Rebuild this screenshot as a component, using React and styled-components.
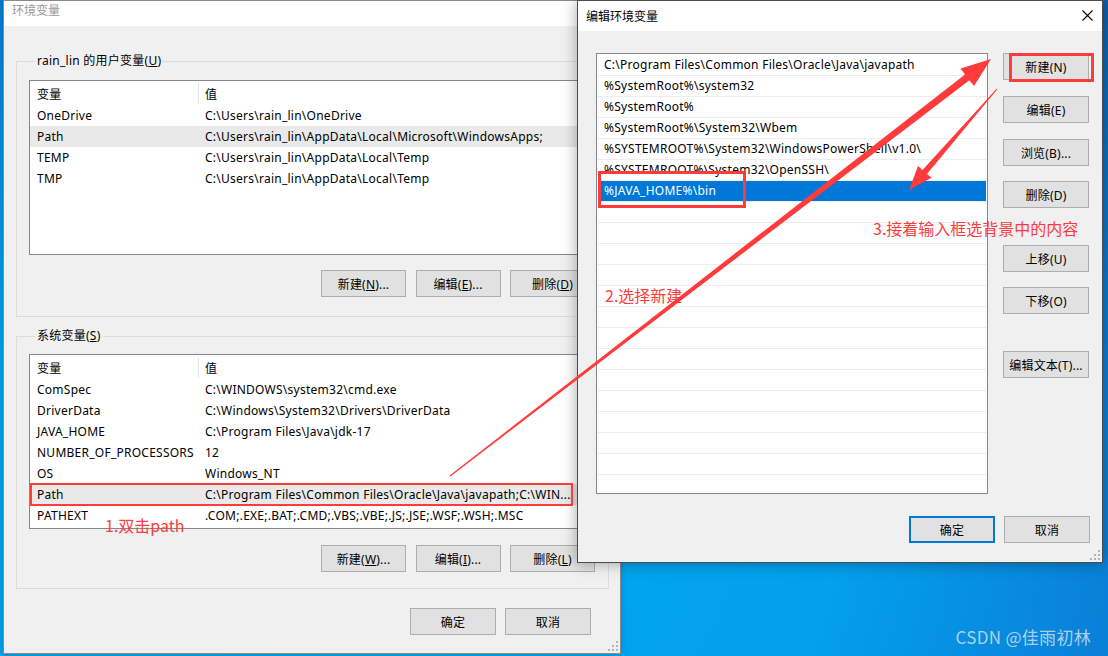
import React from 'react';
import styled, { createGlobalStyle } from 'styled-components';

const UI_FONT = `"Noto Sans", "Noto Sans CJK SC", sans-serif`;
const ANNO_FONT = `"Noto Sans CJK SC", "Noto Sans", sans-serif`;
const RED = '#ff3b3b';

const GlobalStyle = createGlobalStyle`
  html, body { margin: 0; padding: 0; }
  body {
    width: 1108px; height: 656px; overflow: hidden;
    font-family: ${UI_FONT}; font-size: 12px; color: #000;
  }
  *, *::before, *::after { box-sizing: border-box; }
`;

const Desktop = styled.div`
  position: relative;
  width: 1108px;
  height: 656px;
  overflow: hidden;
  background: radial-gradient(ellipse 90% 120% at 35% 80%, #00a8f2 0%, #03a0ec 45%, #0a7ed6 75%, #0f5ea8 100%);
`;

const Window = styled.div`
  position: absolute;
  left: ${p => p.$x}px;
  top: ${p => p.$y}px;
  width: ${p => p.$w}px;
  height: ${p => p.$h}px;
  display: flex;
  flex-direction: column;
  background: #f0f0f0;
  border: 1px solid ${p => (p.$active ? '#4d4d4d' : '#8a8a8a')};
  box-shadow: ${p => (p.$active ? '0 0 14px rgba(0,0,0,0.35)' : '0 0 6px rgba(0,0,0,0.2)')};
  letter-spacing: 0.25px;
`;

const TitleBar = styled.div`
  flex: none;
  height: ${p => p.$h}px;
  background: #fff;
  display: flex;
  align-items: ${p => (p.$top ? 'flex-start' : 'center')};
  justify-content: space-between;
  padding: ${p => (p.$top ? '1px 0 0 8px' : '0 9px 0 8px')};
  line-height: 17px;
  letter-spacing: 0;
  color: ${p => (p.$active ? '#000' : '#999')};
`;

const CloseIcon = styled.svg`
  width: 11px;
  height: 11px;
  margin-top: -2px;
`;

const MainBody = styled.div`
  flex: 1;
  display: flex;
  flex-direction: column;
  padding: 0 11px 0 12px;
`;

const GroupBox = styled.fieldset`
  margin: ${p => p.$mt}px 0 0 0;
  padding: ${p => p.$pt}px 13px ${p => p.$pb}px 12px;
  border: 1px solid #dcdcdc;
  min-width: 0;
`;

const Legend = styled.legend`
  padding: 0 2px;
  margin-left: 6px;
  line-height: 16px;
  font-size: 12px;
`;

const ListView = styled.div`
  height: 175px;
  background: #fff;
  border: 1px solid #828790;
  overflow: hidden;
`;

const HeaderRow = styled.div`
  display: grid;
  grid-template-columns: 169px 1fr;
  height: 24px;
`;

const HeaderCell = styled.div`
  display: flex;
  align-items: center;
  padding-left: ${p => (p.$first ? 7 : 6)}px;
  border-right: ${p => (p.$first ? '1px solid #e5e5e5' : 'none')};
  margin: 2px 0 1px;
`;

const VarRow = styled.div`
  display: grid;
  grid-template-columns: 169px 1fr;
  height: 21px;
  align-items: center;
  background: ${p => (p.$selected ? '#e9e9e9' : 'transparent')};
`;

const Cell = styled.div`
  white-space: nowrap;
  overflow: visible;
  padding-left: ${p => (p.$first ? 7 : 6)}px;
`;

const ButtonRow = styled.div`
  display: flex;
  justify-content: flex-end;
  gap: ${p => p.$gap}px;
  margin-top: ${p => p.$mt}px;
  padding-right: ${p => p.$pr || 0}px;
`;

const PushButton = styled.button`
  width: ${p => p.$w || 85}px;
  height: 27px;
  margin: 0;
  padding: 0;
  font-family: ${UI_FONT};
  font-size: 12px;
  letter-spacing: 0.2px;
  color: #000;
  background: #e1e1e1;
  border: ${p => (p.$default ? '2px solid #0078d7' : '1px solid #adadad')};
  white-space: nowrap;
  cursor: default;
`;

const SideButton = styled(PushButton)`
  margin-top: ${p => p.$mt}px;
`;

const EditBody = styled.div`
  flex: 1;
  display: flex;
  flex-direction: column;
  padding: 22px 12px 0 18px;
`;

const EditMain = styled.div`
  display: flex;
  gap: 15px;
`;

const PathList = styled.div`
  width: 392px;
  height: 441px;
  background: #fff;
  border: 1px solid #828790;
  padding: 1px 1px 0;
  overflow: hidden;
  display: flex;
  flex-direction: column;
`;

const PathItem = styled.div`
  flex: none;
  height: 21px;
  line-height: 20px;
  padding-left: 6px;
  border-bottom: 1px solid #ececec;
  white-space: nowrap;
  background: ${p => (p.$selected ? '#0078d7' : 'transparent')};
  color: ${p => (p.$selected ? '#fff' : '#000')};
`;

const SideButtons = styled.div`
  display: flex;
  flex-direction: column;
`;

const SizeGrip = styled.svg`
  position: absolute;
  right: 2px;
  bottom: 2px;
  width: 10px;
  height: 10px;
`;

const Annotation = styled.div`
  position: absolute;
  left: ${p => p.$x}px;
  top: ${p => p.$y}px;
  font-family: ${ANNO_FONT};
  font-size: 16px;
  line-height: 20px;
  color: ${RED};
  white-space: nowrap;
`;

const RedFrame = styled.div`
  position: absolute;
  left: ${p => p.$x}px;
  top: ${p => p.$y}px;
  width: ${p => p.$w}px;
  height: ${p => p.$h}px;
  border: ${p => p.$t}px solid ${RED};
`;

const ArrowLayer = styled.svg`
  position: absolute;
  left: 0;
  top: 0;
  width: 1108px;
  height: 656px;
  pointer-events: none;
`;

const Watermark = styled.div`
  position: absolute;
  right: 17px;
  bottom: 8px;
  font-family: ${ANNO_FONT};
  font-size: 17px;
  line-height: 22px;
  letter-spacing: 0.3px;
  color: rgba(218, 226, 236, 0.8);
  white-space: nowrap;
`;

const Grip = () => (
  <SizeGrip viewBox="0 0 10 10">
    {[[8, 0], [8, 4], [4, 4], [8, 8], [4, 8], [0, 8]].map(([x, y], i) => (
      <rect key={i} x={x} y={y} width="2" height="2" fill="#b4b4b4" />
    ))}
  </SizeGrip>
);

const userVars = [
  ['OneDrive', 'C:\\Users\\rain_lin\\OneDrive'],
  ['Path', 'C:\\Users\\rain_lin\\AppData\\Local\\Microsoft\\WindowsApps;', true],
  ['TEMP', 'C:\\Users\\rain_lin\\AppData\\Local\\Temp'],
  ['TMP', 'C:\\Users\\rain_lin\\AppData\\Local\\Temp'],
];

const sysVars = [
  ['ComSpec', 'C:\\WINDOWS\\system32\\cmd.exe'],
  ['DriverData', 'C:\\Windows\\System32\\Drivers\\DriverData'],
  ['JAVA_HOME', 'C:\\Program Files\\Java\\jdk-17'],
  ['NUMBER_OF_PROCESSORS', '12'],
  ['OS', 'Windows_NT'],
  ['Path', 'C:\\Program Files\\Common Files\\Oracle\\Java\\javapath;C:\\WIN...', true],
  ['PATHEXT', '.COM;.EXE;.BAT;.CMD;.VBS;.VBE;.JS;.JSE;.WSF;.WSH;.MSC'],
];

const pathEntries = [
  'C:\\Program Files\\Common Files\\Oracle\\Java\\javapath',
  '%SystemRoot%\\system32',
  '%SystemRoot%',
  '%SystemRoot%\\System32\\Wbem',
  '%SYSTEMROOT%\\System32\\WindowsPowerShell\\v1.0\\',
  '%SYSTEMROOT%\\System32\\OpenSSH\\',
  '%JAVA_HOME%\\bin',
];

const VarList = ({ rows }) => (
  <ListView>
    <HeaderRow>
      <HeaderCell $first>变量</HeaderCell>
      <HeaderCell>值</HeaderCell>
    </HeaderRow>
    {rows.map(([k, v, sel]) => (
      <VarRow key={k} $selected={sel}>
        <Cell $first>{k}</Cell>
        <Cell>{v}</Cell>
      </VarRow>
    ))}
  </ListView>
);

const sideButtons = [
  ['新建(N)', 0],
  ['编辑(E)', 16],
  ['浏览(B)...', 16],
  ['删除(D)', 15],
  ['上移(U)', 37],
  ['下移(O)', 15],
  ['编辑文本(T)...', 37],
];

function arrowPoints(sx, sy, tx, ty, headLen, headHalf, w0, w1) {
  const dx = tx - sx;
  const dy = ty - sy;
  const L = Math.hypot(dx, dy);
  const ux = dx / L;
  const uy = dy / L;
  const nx = -uy;
  const ny = ux;
  const bx = tx - headLen * ux;
  const by = ty - headLen * uy;
  const pts = [
    [sx + w0 * nx, sy + w0 * ny],
    [bx + w1 * nx, by + w1 * ny],
    [bx + headHalf * nx, by + headHalf * ny],
    [tx, ty],
    [bx - headHalf * nx, by - headHalf * ny],
    [bx - w1 * nx, by - w1 * ny],
    [sx - w0 * nx, sy - w0 * ny],
  ];
  return pts.map(p => p.map(v => v.toFixed(1)).join(',')).join(' ');
}

export default function App() {
  return (
    <>
      <GlobalStyle />
      <Desktop>
        <Window $x={3} $y={0} $w={618} $h={654}>
          <TitleBar $h={25} $top>环境变量</TitleBar>
          <MainBody>
            <GroupBox $mt={27} $pt={11} $pb={19}>
              <Legend>rain_lin 的用户变量(<u>U</u>)</Legend>
              <VarList rows={userVars} />
              <ButtonRow $gap={9.5} $mt={15}>
                <PushButton>新建(<u>N</u>)...</PushButton>
                <PushButton>编辑(<u>E</u>)...</PushButton>
                <PushButton>删除(<u>D</u>)</PushButton>
              </ButtonRow>
            </GroupBox>
            <GroupBox $mt={11} $pt={10} $pb={16}>
              <Legend>系统变量(<u>S</u>)</Legend>
              <VarList rows={sysVars} />
              <ButtonRow $gap={9.5} $mt={16}>
                <PushButton>新建(<u>W</u>)...</PushButton>
                <PushButton>编辑(<u>I</u>)...</PushButton>
                <PushButton>删除(<u>L</u>)</PushButton>
              </ButtonRow>
            </GroupBox>
            <ButtonRow $gap={9} $mt={19} $pr={18}>
              <PushButton $w={86}>确定</PushButton>
              <PushButton $w={86}>取消</PushButton>
            </ButtonRow>
          </MainBody>
          <Grip />
        </Window>

        <Window $x={577} $y={0} $w={526} $h={563} $active>
          <TitleBar $h={30} $active>
            <span>编辑环境变量</span>
            <CloseIcon viewBox="0 0 11 11">
              <path d="M0.5 0.5 L10.5 10.5 M10.5 0.5 L0.5 10.5" stroke="#000" strokeWidth="1.1" fill="none" />
            </CloseIcon>
          </TitleBar>
          <EditBody>
            <EditMain>
              <PathList>
                {Array.from({ length: 22 }).map((_, i) => (
                  <PathItem key={i} $selected={i === 6}>
                    {pathEntries[i] || '\u00a0'}
                  </PathItem>
                ))}
              </PathList>
              <SideButtons>
                {sideButtons.map(([label, mt]) => (
                  <SideButton key={label} $w={86} $mt={mt}>{label}</SideButton>
                ))}
              </SideButtons>
            </EditMain>
            <ButtonRow $gap={9} $mt={22}>
              <PushButton $w={86} $default>确定</PushButton>
              <PushButton $w={86}>取消</PushButton>
            </ButtonRow>
          </EditBody>
          <Grip />
        </Window>

        <RedFrame $x={30} $y={483} $w={543} $h={23} $t={2} />
        <RedFrame $x={598} $y={171} $w={148} $h={37} $t={3} />
        <RedFrame $x={1009} $y={53} $w={85} $h={29} $t={3} />

        <Annotation $x={105} $y={515}>1.双击path</Annotation>
        <Annotation $x={605} $y={285}>2.选择新建</Annotation>
        <Annotation $x={873} $y={218}>3.接着输入框选背景中的内容</Annotation>

        <ArrowLayer viewBox="0 0 1108 656">
          <polygon points={arrowPoints(450, 476, 991, 59, 30, 11, 0.7, 3.6)} fill={RED} />
          <polygon points={arrowPoints(997, 89, 909, 190, 24, 9, 0.5, 3)} fill={RED} />
        </ArrowLayer>

        <Watermark>CSDN @佳雨初林</Watermark>
      </Desktop>
    </>
  );
}
